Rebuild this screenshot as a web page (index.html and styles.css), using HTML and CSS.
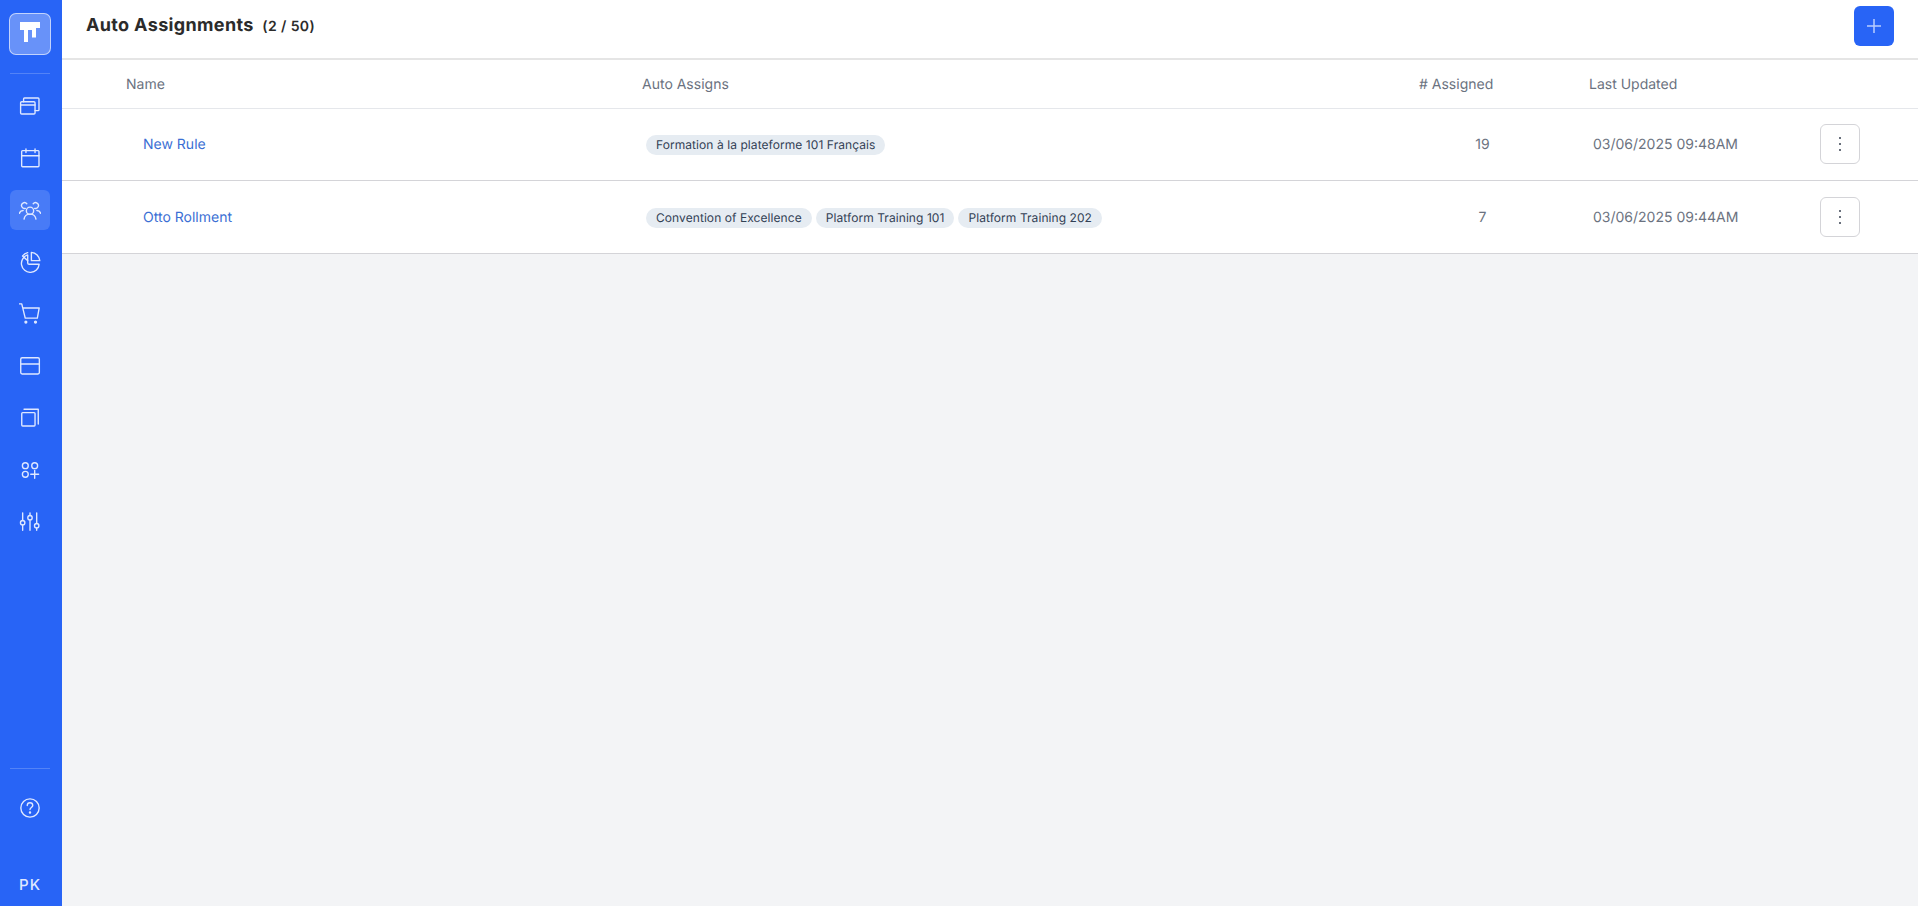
FILE: index.html
```html
<!DOCTYPE html>
<html lang="en">
<head>
<meta charset="utf-8">
<title>Auto Assignments</title>
<link rel="stylesheet" href="styles.css">
</head>
<body>
<div class="app">
  <aside class="sidebar">
    <div class="logo">
      <svg width="24" height="24" viewBox="0 0 24 24"><path class="logo-mark" d="M2 0h20v6h-4v9.500h-4V8h-4v12H6V8H2z"/></svg>
    </div>
    <div class="side-rule side-rule-top"></div>
    <nav class="nav">
      <a class="nav-item"><svg class="ic" viewBox="0 0 24 24"><rect x="1.750" y="7.300" width="15.750" height="13.400" rx="1.200"/><path d="M1.750 10.900H17.500M5 7.300v-3a1 1 0 0 1 1-1h14.800a1 1 0 0 1 1 1V16a1 1 0 0 1-1 1h-3.300"/></svg></a>
      <a class="nav-item"><svg class="ic" viewBox="0 0 24 24"><rect x="2.900" y="4" width="18.900" height="17.500" rx="1"/><path d="M2.900 9.500h18.900M7.600 2v4M17.500 2v4"/></svg></a>
      <a class="nav-item active"><svg class="ic" viewBox="0 0 24 24"><circle cx="12" cy="12.800" r="4"/><path d="M5.500 22c.5-3.500 3-5.500 6.500-5.500s6 2 6.500 5.500"/><path d="M7 10.200a3.200 3.200 0 1 1 1.500-5M.5 15.500c.5-2 2-3 4-3M17 10.200a3.200 3.200 0 1 0-1.500-5M23.500 15.500c-.5-2-2-3-4-3"/></svg></a>
      <a class="nav-item"><svg class="ic" viewBox="0 0 24 24"><path d="M9.500 4.300A9.700 9.700 0 1 0 22 14.500H11a1.500 1.500 0 0 1-1.500-1.500z"/><path d="M13.500 1.500v9h9.200A10 10 0 0 0 13.500 1.500zM9.500 1.800A10 10 0 0 0 3.800 5.500l5.700 5"/></svg></a>
      <a class="nav-item"><svg class="ic" viewBox="0 0 24 24"><path d="M.5 1H3l3.800 15.500h13.200L22 5.500H4"/><circle class="dot" cx="7.500" cy="20.800" r="1"/><circle class="dot" cx="18" cy="20.800" r="1"/></svg></a>
      <a class="nav-item"><svg class="ic" viewBox="0 0 24 24"><rect x="1.900" y="3" width="20.300" height="17.700" rx="1.500"/><path d="M1.900 9.800h20.300"/></svg></a>
      <a class="nav-item"><svg class="ic" viewBox="0 0 24 24"><rect x="3" y="6.200" width="14.500" height="14.500" rx="1"/><path d="M5.500 2.500H21V18.500"/></svg></a>
      <a class="nav-item"><svg class="ic" viewBox="0 0 24 24"><circle cx="6.900" cy="7.300" r="3.200"/><circle cx="17.100" cy="7.300" r="3.200"/><circle cx="6.900" cy="16.700" r="3.200"/><path d="M17.100 12.400v8.600M12.800 16.700h8.600"/></svg></a>
      <a class="nav-item"><svg class="ic" viewBox="0 0 24 24"><path d="M4 2v8.300M4 15.100v5.900M12 2v2.900M12 9.700V21M19.300 2v11.600M19.300 18.400V21"/><circle cx="4" cy="12.700" r="2.400"/><circle cx="12" cy="7.300" r="2.400"/><circle cx="19.300" cy="16" r="2.400"/></svg></a>
    </nav>
    <div class="side-bottom">
      <div class="side-rule"></div>
      <a class="help"><svg class="ic" viewBox="0 0 24 24"><circle cx="12" cy="12" r="10"/><path d="M9 9.300a3 3 0 0 1 6 0c0 2-3 2.200-3 4.300"/><circle class="dot" cx="12" cy="17" r=".6"/></svg></a>
      <div class="avatar">PK</div>
    </div>
  </aside>
  <main class="main">
    <header class="topbar">
      <h1 class="title">Auto Assignments <span class="count">(2 / 50)</span></h1>
      <button class="add" type="button"><svg width="16" height="16" viewBox="0 0 16 16"><path class="plus" d="M8 1v14M1 8h14"/></svg></button>
    </header>
    <section class="table">
      <div class="row head">
        <div class="c-name">Name</div>
        <div class="c-assigns">Auto Assigns</div>
        <div class="c-num"># Assigned</div>
        <div class="c-date">Last Updated</div>
        <div></div>
      </div>
      <div class="row body-row first">
        <div class="c-name"><a class="link">New Rule</a></div>
        <div class="c-assigns pills"><span class="pill">Formation à la plateforme 101 Français</span></div>
        <div class="c-num val">19</div>
        <div class="c-date val">03/06/2025 09:48AM</div>
        <div><button class="more" type="button"><svg width="4" height="16" viewBox="0 0 4 16"><circle cx="2" cy="2" r="1"/><circle cx="2" cy="8" r="1"/><circle cx="2" cy="14" r="1"/></svg></button></div>
      </div>
      <div class="row body-row">
        <div class="c-name"><a class="link">Otto Rollment</a></div>
        <div class="c-assigns pills"><span class="pill">Convention of Excellence</span><span class="pill">Platform Training 101</span><span class="pill">Platform Training 202</span></div>
        <div class="c-num val">7</div>
        <div class="c-date val">03/06/2025 09:44AM</div>
        <div><button class="more" type="button"><svg width="4" height="16" viewBox="0 0 4 16"><circle cx="2" cy="2" r="1"/><circle cx="2" cy="8" r="1"/><circle cx="2" cy="14" r="1"/></svg></button></div>
      </div>
    </section>
  </main>
</div>
</body>
</html>
```
FILE: styles.css
```css
* { box-sizing: border-box; }
html, body { margin: 0; height: 100%; }
body { font-family: Inter, "Liberation Sans", sans-serif; background: #f3f4f6; overflow: hidden; text-rendering: geometricPrecision; }
.app { display: flex; height: 906px; }
.sidebar { width: 62px; flex: none; background: #2864f6; display: flex; flex-direction: column; align-items: center; padding: 13px 2px 0 0; }
.logo { width: 42px; height: 42px; border-radius: 7px; background: rgba(255,255,255,.3); border: 1px solid rgba(255,255,255,.6); display: flex; align-items: center; justify-content: center; }
.logo-mark { fill: #fff; }
.side-rule { width: 40px; height: 1px; background: rgba(255,255,255,.2); flex: none; }
.side-rule-top { margin: 18px 0 12px; }
.nav { display: flex; flex-direction: column; gap: 12px; }
.nav-item { width: 40px; height: 40px; border-radius: 6px; display: flex; align-items: center; justify-content: center; }
.nav-item.active { background: rgba(255,255,255,.15); }
.ic { width: 22px; height: 22px; fill: none; stroke: #dfe8ff; stroke-width: 1.500; stroke-linecap: round; stroke-linejoin: round; }
.ic .dot { fill: #dfe8ff; }
.side-bottom { margin-top: auto; display: flex; flex-direction: column; align-items: center; padding-bottom: 11px; }
.help { width: 40px; height: 40px; margin-top: 19px; display: flex; align-items: center; justify-content: center; }
.avatar { margin-top: 47px; height: 20px; line-height: 20px; font-size: 15px; font-weight: 500; letter-spacing: 1px; color: #dfe8ff; }
.main { flex: 1; min-width: 0; display: flex; flex-direction: column; }
.topbar { height: 60px; flex: none; background: #fff; border-bottom: 2px solid #e5e5e5; display: flex; align-items: center; justify-content: space-between; padding: 0 24px 6px 24px; }
.title { margin: 0 0 2px; font-size: 18px; font-weight: 700; letter-spacing: .35px; color: #2b2b2b; white-space: pre-wrap; }
.count { font-size: 14px; font-weight: 600; margin-left: 4px; letter-spacing: .4px; }
.add { width: 40px; height: 40px; border: 0; padding: 0; border-radius: 6px; background: #2864f6; display: flex; align-items: center; justify-content: center; }
.plus { stroke: #b9cdfe; stroke-width: 1.500; fill: none; }
.table { background: #fff; }
.row { display: grid; grid-template-columns: 580px 777px 170px 231px 1fr; align-items: center; border-bottom: 1px solid #d4d4d8; }
.head { height: 49px; font-size: 14px; color: #6b7280; border-bottom-color: #e5e7eb; }
.head .c-name { padding-left: 64px; }
.body-row { height: 73px; font-size: 14px; }
.body-row.first { height: 72px; padding-bottom: 1px; }
.body-row .c-name { padding-left: 81px; }
.link { color: #3b6fd4; }
.pills { display: flex; gap: 4px; padding-left: 4px; margin-top: 2px; }
.pill { height: 20px; line-height: 20px; padding: 0 10px; border-radius: 10px; background: #e6ecf2; color: #334155; font-size: 12px; letter-spacing: .07px; white-space: nowrap; }
.val { color: #6b7280; }
.c-num.val { width: 127px; text-align: center; }
.c-date.val { padding-left: 4px; }
.more { width: 40px; height: 40px; padding: 0; border: 1px solid #d4d4d8; border-radius: 6px; background: #fff; display: flex; align-items: center; justify-content: center; }
.more circle { fill: #374151; }
```
